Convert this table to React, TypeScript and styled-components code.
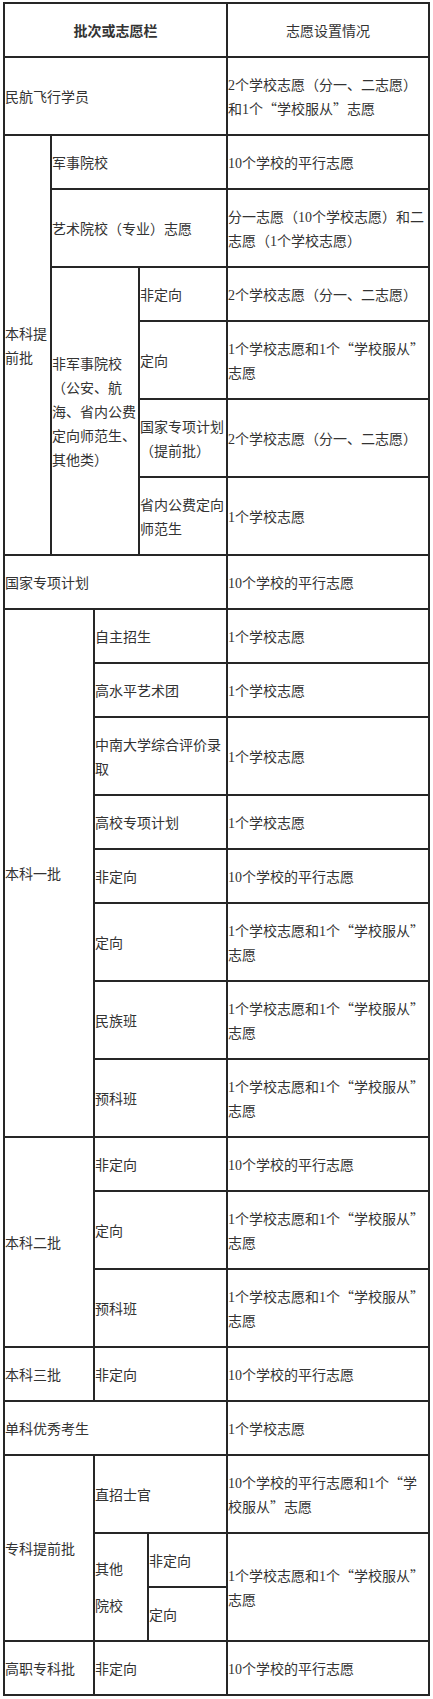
import React from "react";
import styled, { createGlobalStyle } from "styled-components";

const GlobalStyle = createGlobalStyle`
  * { box-sizing: border-box; }
  html, body { margin: 0; padding: 0; background: #ffffff; }
  body {
    font-family: "Noto Sans CJK SC", "Noto Sans", sans-serif;
    font-size: 14px;
    color: #333333;
  }
`;

const Page = styled.div`
  padding: 2px 0 0 3px;
`;

const Table = styled.table`
  width: 427px;
  table-layout: fixed;
  border-collapse: separate;
  border-spacing: 0;
  border-top: 2px solid #262626;
  border-left: 2px solid #262626;
`;

const Col = styled.col<{ $w: number }>`
  width: ${(p) => p.$w}px;
`;

const Cell = styled.td<{ $center?: boolean; $bold?: boolean; $leading?: number }>`
  padding: 14px 0;
  border-right: 2px solid #262626;
  border-bottom: 2px solid #262626;
  vertical-align: middle;
  text-align: ${(p) => (p.$center ? "center" : "left")};
  font-weight: ${(p) => (p.$bold ? 700 : 400)};
  line-height: ${(p) => p.$leading ?? 24}px;
`;

const Num = styled.span`
  font-family: "Liberation Serif", "Times New Roman", serif;
  line-height: 14px;
`;

const rich = (s: string) =>
  s.split(/(\d+)/).map((part, i) =>
    /^\d+$/.test(part) ? <Num key={i}>{part}</Num> : <React.Fragment key={i}>{part}</React.Fragment>
  );

const ZW = "\u200B";
const T10 = "10个学校的平行志愿";
const T1 = "1个学校志愿";
const TFC = `1个学校志愿和1个“学校服从”${ZW}志愿`;
const T2 = "2个学校志愿（分一、二志愿）";

export default function App() {
  return (
    <>
      <GlobalStyle />
      <Page>
        <Table>
          <colgroup>
            <Col $w={47} />
            <Col $w={43} />
            <Col $w={45} />
            <Col $w={9} />
            <Col $w={79} />
            <Col $w={202} />
          </colgroup>
          <tbody>
            <tr>
              <Cell colSpan={5} $center $bold>批次或志愿栏</Cell>
              <Cell $center>志愿设置情况</Cell>
            </tr>
            <tr>
              <Cell colSpan={5}>民航飞行学员</Cell>
              <Cell>{rich(`2个学校志愿（分一、二志愿）和1个“学校服从”${ZW}志愿`)}</Cell>
            </tr>
            <tr>
              <Cell rowSpan={6}>本科提前批</Cell>
              <Cell colSpan={4}>军事院校</Cell>
              <Cell>{rich(T10)}</Cell>
            </tr>
            <tr>
              <Cell colSpan={4}>艺术院校（专业）志愿</Cell>
              <Cell>{rich("分一志愿（10个学校志愿）和二志愿（1个学校志愿）")}</Cell>
            </tr>
            <tr>
              <Cell colSpan={2} rowSpan={4}>非军事院校（公安、航海、省内公费定向师范生、其他类）</Cell>
              <Cell colSpan={2}>非定向</Cell>
              <Cell>{rich(T2)}</Cell>
            </tr>
            <tr>
              <Cell colSpan={2}>定向</Cell>
              <Cell>{rich(TFC)}</Cell>
            </tr>
            <tr>
              <Cell colSpan={2}>国家专项计划（提前批）</Cell>
              <Cell>{rich(T2)}</Cell>
            </tr>
            <tr>
              <Cell colSpan={2}>省内公费定向师范生</Cell>
              <Cell>{rich(T1)}</Cell>
            </tr>
            <tr>
              <Cell colSpan={5}>国家专项计划</Cell>
              <Cell>{rich(T10)}</Cell>
            </tr>
            <tr>
              <Cell colSpan={2} rowSpan={8}>本科一批</Cell>
              <Cell colSpan={3}>自主招生</Cell>
              <Cell>{rich(T1)}</Cell>
            </tr>
            <tr>
              <Cell colSpan={3}>高水平艺术团</Cell>
              <Cell>{rich(T1)}</Cell>
            </tr>
            <tr>
              <Cell colSpan={3}>中南大学综合评价录取</Cell>
              <Cell>{rich(T1)}</Cell>
            </tr>
            <tr>
              <Cell colSpan={3}>高校专项计划</Cell>
              <Cell>{rich(T1)}</Cell>
            </tr>
            <tr>
              <Cell colSpan={3}>非定向</Cell>
              <Cell>{rich(T10)}</Cell>
            </tr>
            <tr>
              <Cell colSpan={3}>定向</Cell>
              <Cell>{rich(TFC)}</Cell>
            </tr>
            <tr>
              <Cell colSpan={3}>民族班</Cell>
              <Cell>{rich(TFC)}</Cell>
            </tr>
            <tr>
              <Cell colSpan={3}>预科班</Cell>
              <Cell>{rich(TFC)}</Cell>
            </tr>
            <tr>
              <Cell colSpan={2} rowSpan={3}>本科二批</Cell>
              <Cell colSpan={3}>非定向</Cell>
              <Cell>{rich(T10)}</Cell>
            </tr>
            <tr>
              <Cell colSpan={3}>定向</Cell>
              <Cell>{rich(TFC)}</Cell>
            </tr>
            <tr>
              <Cell colSpan={3}>预科班</Cell>
              <Cell>{rich(TFC)}</Cell>
            </tr>
            <tr>
              <Cell colSpan={2}>本科三批</Cell>
              <Cell colSpan={3}>非定向</Cell>
              <Cell>{rich(T10)}</Cell>
            </tr>
            <tr>
              <Cell colSpan={5}>单科优秀考生</Cell>
              <Cell>{rich(T1)}</Cell>
            </tr>
            <tr>
              <Cell colSpan={2} rowSpan={3}>专科提前批</Cell>
              <Cell colSpan={3}>直招士官</Cell>
              <Cell>{rich(`10个学校的平行志愿和1个“学校服从”${ZW}志愿`)}</Cell>
            </tr>
            <tr>
              <Cell colSpan={2} rowSpan={2} $leading={37}>
                其他
                <br />
                院校
              </Cell>
              <Cell>非定向</Cell>
              <Cell rowSpan={2}>{rich(TFC)}</Cell>
            </tr>
            <tr>
              <Cell>定向</Cell>
            </tr>
            <tr>
              <Cell colSpan={2}>高职专科批</Cell>
              <Cell colSpan={3}>非定向</Cell>
              <Cell>{rich(T10)}</Cell>
            </tr>
          </tbody>
        </Table>
      </Page>
    </>
  );
}
